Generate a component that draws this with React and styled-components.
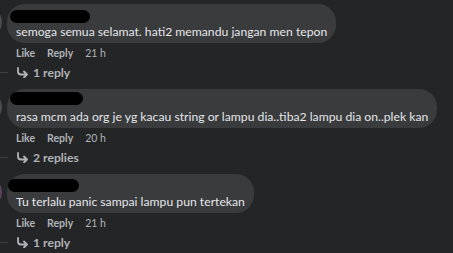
import React from "react";
import styled, { createGlobalStyle } from "styled-components";

const Global = createGlobalStyle`
  html, body { margin: 0; padding: 0; background: #242526; }
  body { font-family: Lato, "Open Sans", "Liberation Sans", sans-serif; overflow: hidden; }
`;

const Page = styled.div`
  width: 453px;
  height: 253px;
  padding-top: 4px;
  box-sizing: border-box;
  background: #242526;
  overflow: hidden;
`;

const Comment = styled.div`
  display: flex;
  flex-direction: column;
  margin-bottom: 7px;
`;

const Top = styled.div`
  display: flex;
  align-items: flex-start;
`;

const Avatar = styled.div`
  width: 32px;
  height: 32px;
  border-radius: 50%;
  margin-left: -30px;
  margin-right: 5px;
  margin-top: 2px;
  flex: none;
  background: ${(p) => p.$color};
`;

const Bubble = styled.div`
  background: #3a3b3c;
  border-radius: 18px;
  padding: 3px 9px 5px 9px;
  color: #e4e6eb;
  height: 31px;
`;

const NameRow = styled.div`
  position: relative;
  height: 16px;
`;

const Redact = styled.span`
  position: absolute;
  left: ${(p) => p.$left}px;
  top: ${(p) => p.$top}px;
  width: ${(p) => p.$w}px;
  height: 13px;
  border-radius: 7px;
  background: #000;
`;

const Text = styled.div`
  font-size: 12.2px;
  line-height: 17px;
  white-space: nowrap;
`;

const Actions = styled.div`
  display: flex;
  gap: 12px;
  margin: 3px 0 0 16px;
  height: 14px;
  font-size: 10.5px;
  line-height: 14px;
  color: #b0b3b8;
`;

const Action = styled.span`
  font-weight: ${(p) => (p.$bold ? 700 : 400)};
`;

const Replies = styled.div`
  display: flex;
  align-items: center;
  margin-top: 3px;
  height: 19px;
  font-size: 12.2px;
  font-weight: 700;
  color: #b0b3b8;
`;

const Connector = styled.div`
  width: 8px;
  height: 1px;
  background: #3e4042;
  margin-right: 8px;
`;

const ArrowIcon = () => (
  <svg width="13" height="11" viewBox="0 0 13 11" style={{ marginRight: 4 }}>
    <path
      d="M2 1 V4.5 A3 3 0 0 0 5 7.5 H11 M8 4.5 L11 7.5 L8 10.5"
      fill="none"
      stroke="#b0b3b8"
      strokeWidth="1.8"
      strokeLinecap="round"
      strokeLinejoin="round"
    />
  </svg>
);

const comments = [
  {
    text: "semoga semua selamat. hati2 memandu jangan men tepon",
    time: "21 h",
    replies: "1 reply",
    avatar: "#4a4c4e",
    blob: { left: -6, top: 3, w: 80 },
  },
  {
    text: "rasa mcm ada org je yg kacau string or lampu dia..tiba2 lampu dia on..plek kan",
    time: "20 h",
    replies: "2 replies",
    avatar: "#4c4d50",
    blob: { left: -6, top: 0, w: 73 },
  },
  {
    text: "Tu terlalu panic sampai lampu pun tertekan",
    time: "21 h",
    replies: "1 reply",
    avatar: "#5a4460",
    blob: { left: -8, top: 2, w: 71 },
  },
];

export default function App() {
  return (
    <>
      <Global />
      <Page>
        {comments.map((c, i) => (
          <Comment key={i}>
            <Top>
              <Avatar $color={c.avatar} />
              <Bubble>
                <NameRow>
                  <Redact $left={c.blob.left} $top={c.blob.top} $w={c.blob.w} />
                </NameRow>
                <Text>{c.text}</Text>
              </Bubble>
            </Top>
            <Actions>
              <Action $bold>Like</Action>
              <Action $bold>Reply</Action>
              <Action>{c.time}</Action>
            </Actions>
            <Replies>
              <Connector />
              <ArrowIcon />
              {c.replies}
            </Replies>
          </Comment>
        ))}
      </Page>
    </>
  );
}
